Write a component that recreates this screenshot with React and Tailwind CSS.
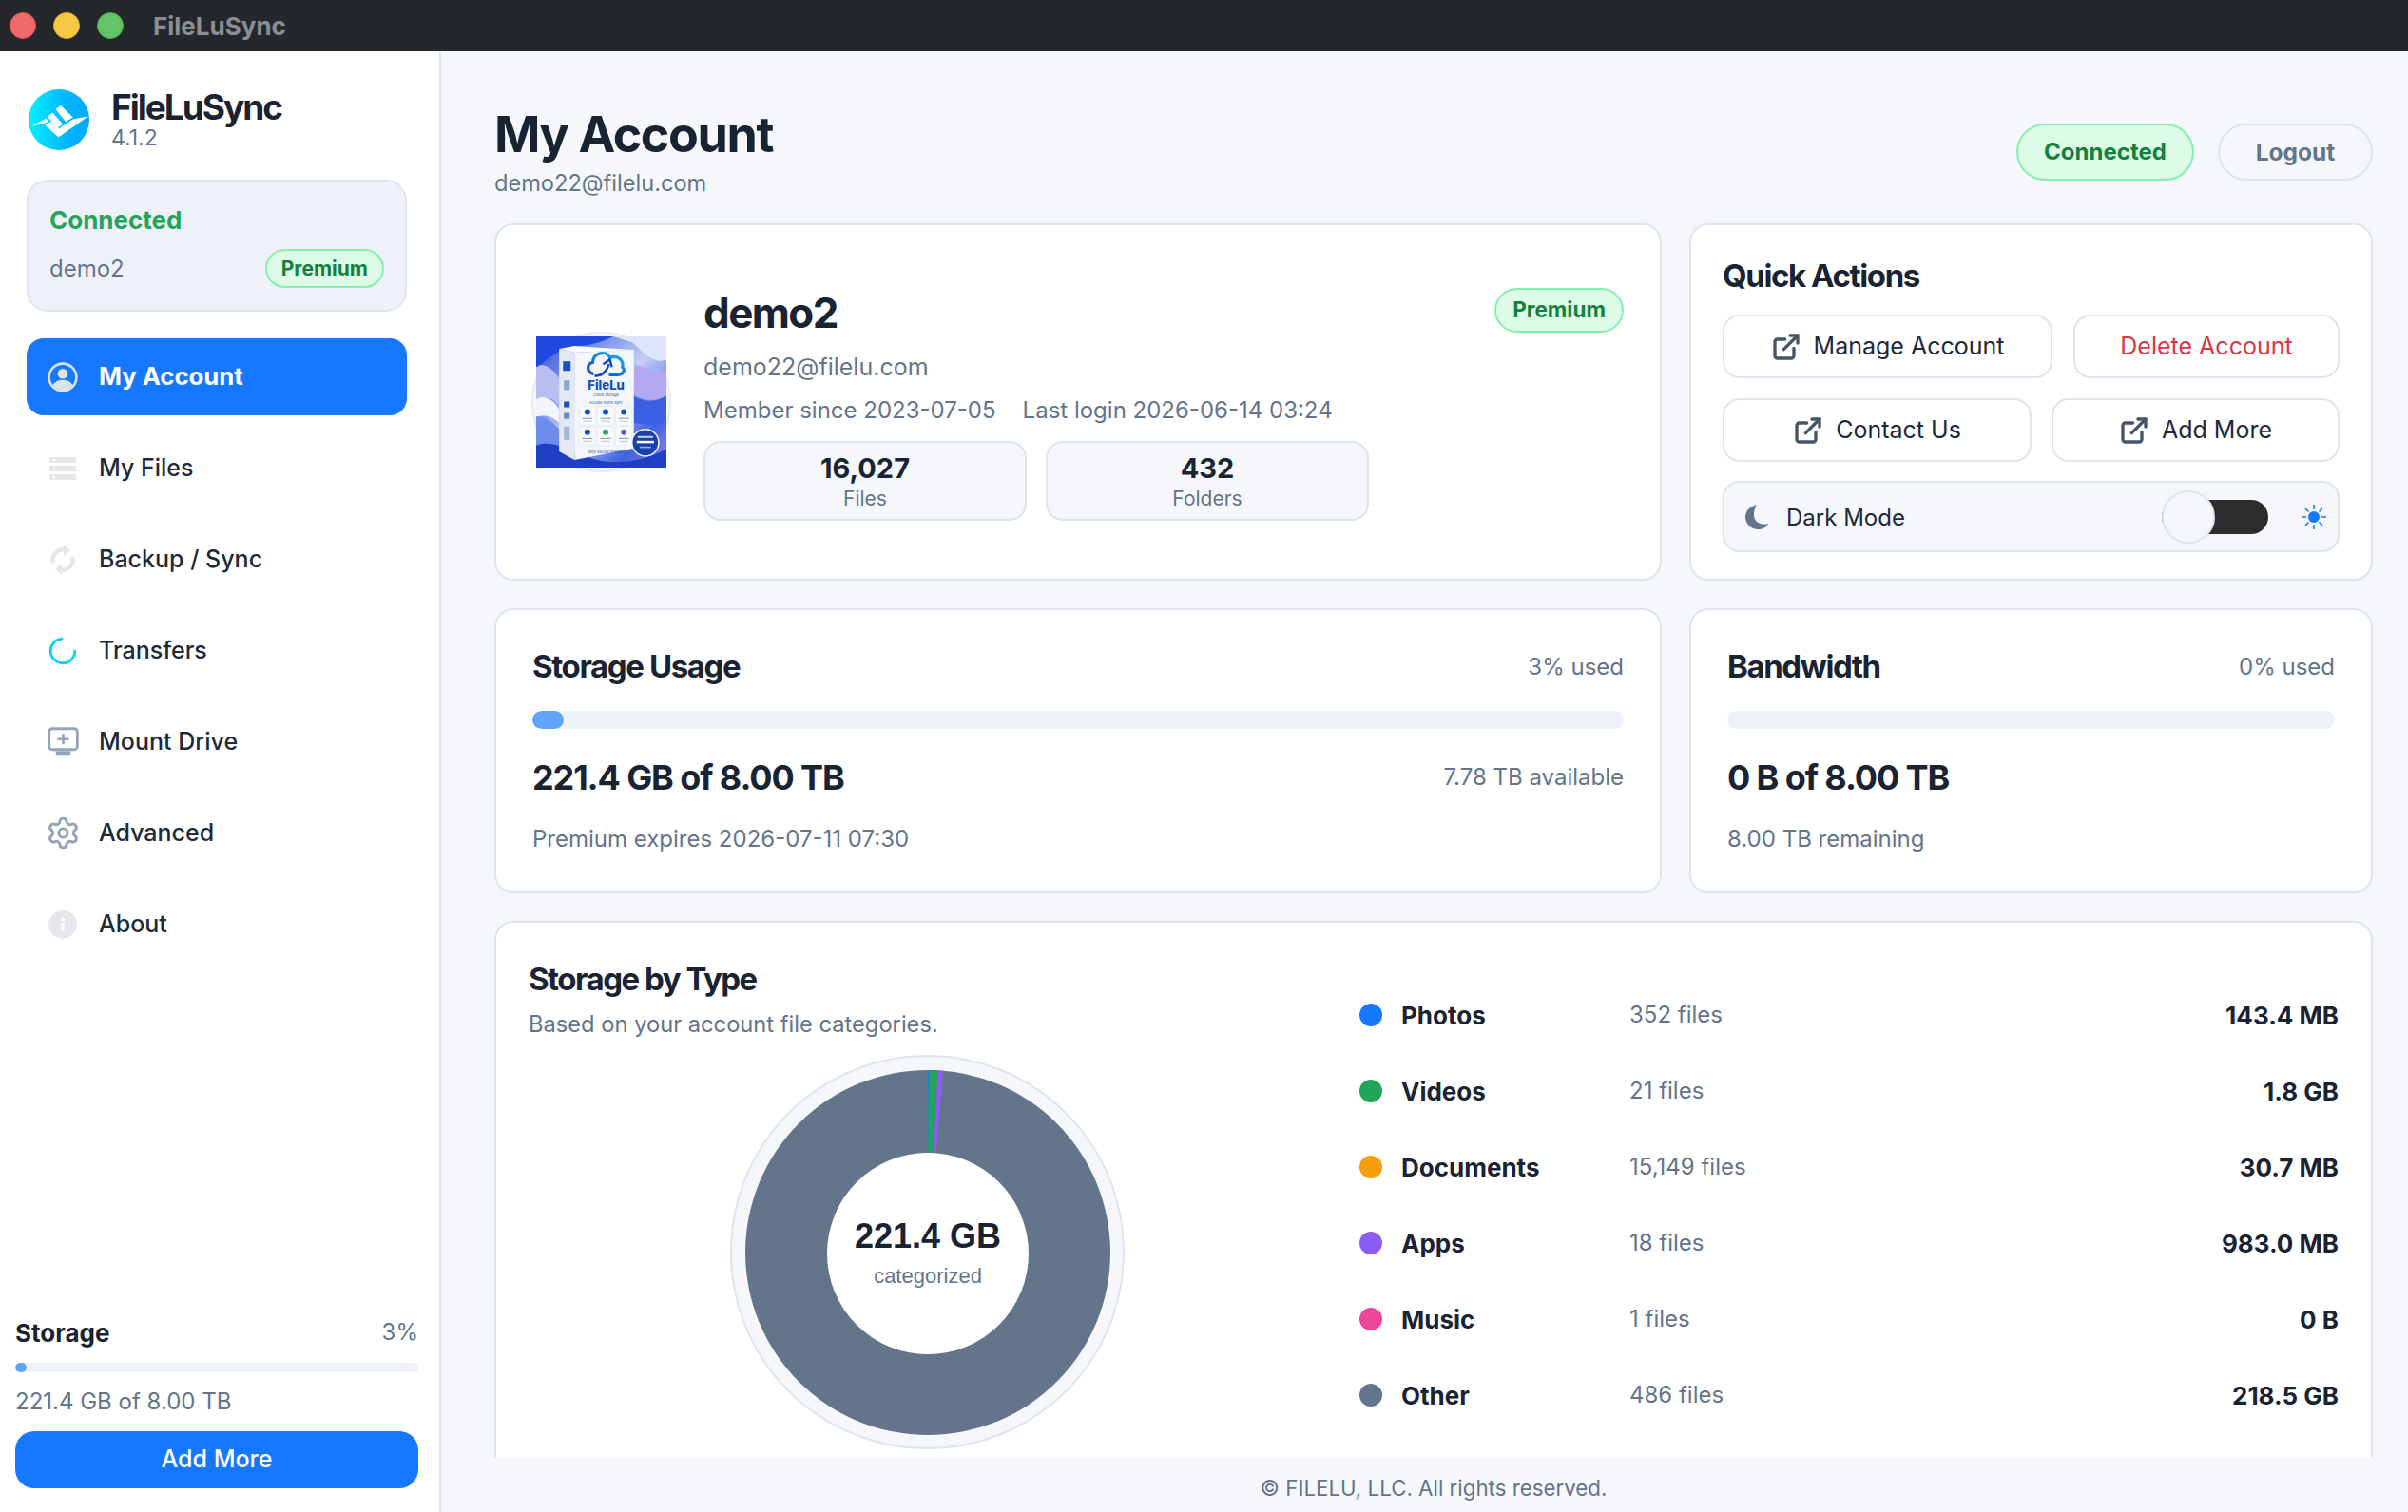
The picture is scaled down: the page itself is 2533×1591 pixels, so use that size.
import { ExternalLink, Settings } from 'lucide-react';

const font = { fontFamily: 'Inter, "Noto Sans", sans-serif' };

const AccountIcon = () => (
  <svg viewBox="0 0 30 30" className="w-[32px] h-[32px]">
    <circle cx="15" cy="15" r="13.5" fill="none" stroke="#dbe2ea" strokeWidth="2.4" />
    <circle cx="15" cy="11.5" r="5" fill="#dbe2ea" />
    <path d="M5 23c2-4 6-5.500 10-5.500s8 1.500 10 5.500c-2.500 3-6 4.500-10 4.500s-7.500-1.500-10-4.500z" fill="#dbe2ea" />
  </svg>
);

const FilesIcon = () => (
  <svg viewBox="0 0 28 24" className="w-[28px] h-[24px]">
    <rect x="0" y="0" width="28" height="6" fill="#e5e7eb" />
    <rect x="0" y="9" width="28" height="6" fill="#e5e7eb" />
    <rect x="0" y="18" width="28" height="6" fill="#e5e7eb" />
    <circle cx="5" cy="3" r="1.300" fill="#fff" />
    <circle cx="5" cy="12" r="1.300" fill="#fff" />
    <circle cx="5" cy="21" r="1.300" fill="#fff" />
  </svg>
);

const SyncIcon = () => (
  <svg viewBox="0 0 28 32" className="w-[28px] h-[32px]" fill="none">
    <path d="M4 19a10.500 10.500 0 0 1 13-13.200" stroke="#e5e7eb" strokeWidth="4.500" />
    <path d="M24 13a10.500 10.500 0 0 1-13 13.200" stroke="#e5e7eb" strokeWidth="4.500" />
    <path d="M15 0l7 6.500-7 5.500z" fill="#e5e7eb" />
    <path d="M13 32l-7-6.500 7-5.500z" fill="#e5e7eb" />
  </svg>
);

const SpinnerIcon = () => (
  <svg viewBox="0 0 30 30" className="w-[30px] h-[30px]" fill="none">
    <path d="M14 2.200A12.800 12.800 0 1 0 27.800 15" stroke="#0fd0fb" strokeWidth="2.800" strokeLinecap="round" />
  </svg>
);

const MountIcon = () => (
  <svg viewBox="0 0 30 28" className="w-[33px] h-[31px]" fill="none">
    <rect x="1.500" y="1.500" width="27" height="20" rx="3" stroke="#94a3b8" strokeWidth="2.600" />
    <path d="M15 6.500v10M9.500 11.500h11" stroke="#94a3b8" strokeWidth="2.400" />
    <rect x="8" y="23" width="14" height="3.500" fill="#94a3b8" />
  </svg>
);

const InfoIcon = () => (
  <svg viewBox="0 0 30 30" className="w-[30px] h-[30px]">
    <circle cx="15" cy="15" r="15" fill="#e5e7eb" />
    <circle cx="15" cy="9.500" r="2" fill="#fff" />
    <rect x="13.500" y="13" width="3" height="9" fill="#fff" />
  </svg>
);

const Logo = () => (
  <svg viewBox="15 15 185 185" className="w-[64px] h-[64px] shrink-0">
    <defs>
      <linearGradient id="logoGrad" x1="0" y1="0.5" x2="1" y2="0.5">
        <stop offset="0" stopColor="#04f0ff" />
        <stop offset="0.6" stopColor="#00b7ff" />
        <stop offset="1" stopColor="#00a8ff" />
      </linearGradient>
    </defs>
    <circle cx="107.500" cy="107.500" r="92.500" fill="url(#logoGrad)" />
    <path d="M24 127L68 104L78 113L60 120Z" fill="#fff" />
    <path d="M72 98L88 86L120 122L103 132Z" fill="#fff" />
    <path d="M97 75L113 64L150 100L128 114Z" fill="#fff" />
    <path d="M66 124L84 113L108 134L150 106L197 97L106 161Z" fill="#fff" />
  </svg>
);

const BoxArt = () => (
  <svg viewBox="0 0 136 137" className="relative w-[137px] h-[138px]">
    <defs>
      <linearGradient id="artBg" x1="0" y1="0" x2="1" y2="1">
        <stop offset="0" stopColor="#2348dc" />
        <stop offset="0.5" stopColor="#c4cef6" />
        <stop offset="0.8" stopColor="#3f63e0" />
        <stop offset="1" stopColor="#a884ec" />
      </linearGradient>
      <linearGradient id="artCloud" x1="0" y1="1" x2="1" y2="0">
        <stop offset="0" stopColor="#0c46c4" />
        <stop offset="1" stopColor="#21b0ee" />
      </linearGradient>
    </defs>
    <rect width="136" height="137" fill="url(#artBg)" />
    <path d="M0 0H80C60 12 36 8 20 18 10 24 6 30 0 32Z" fill="#2149df" />
    <path d="M0 32C8 26 18 34 24 44V72C16 62 8 64 0 66Z" fill="#b9bff0" />
    <path d="M0 66C8 60 18 66 24 76V90C14 82 8 82 0 84Z" fill="#f3f4fc" />
    <path d="M0 84C10 82 20 92 28 102V137H0Z" fill="#6d8cec" />
    <path d="M0 114C20 106 40 124 68 130 92 134 116 128 136 118V137H0Z" fill="#1f3fc4" />
    <path d="M80 0H136V24C122 30 112 16 100 6Z" fill="#dfe5fa" />
    <path d="M102 30C114 30 124 40 136 34V62C126 68 112 68 102 60Z" fill="#b2a8f0" />
    <path d="M102 62C116 70 126 68 136 62V88C124 94 112 92 102 90Z" fill="#3a5fe2" />
    <path d="M24 13L40 10 102 14 40 17Z" fill="#f8f9fc" />
    <path d="M24 13L40 17V129L24 120Z" fill="#e3e8f3" />
    <path d="M40 17L102 14V117L40 129Z" fill="#f4f6fb" />
    <path d="M60 39c-7-1-8-10-1-12 0-10 14-13 18-5 8-3 15 3 13 10 4 4 0 8-5 8H76" fill="none" stroke="url(#artCloud)" strokeWidth="3.200" />
    <path d="M61 41c7 1 12-3 15-12M70 29l7-5 2 8" fill="none" stroke="#0c46c4" strokeWidth="2.400" />
    <text x="73" y="56" textAnchor="middle" fontSize="13" fontWeight="800" fill="#1550b4" fontFamily="Inter">FileLu</text>
    <text x="73" y="63" textAnchor="middle" fontSize="4" fill="#475569" fontFamily="Inter">Cloud Storage</text>
    <text x="73" y="70" textAnchor="middle" fontSize="3.800" fontStyle="italic" fill="#1550b4" fontFamily="Inter">Access Share Sync</text>
    {[[45, 73], [64, 73], [83, 73], [45, 94], [64, 94], [83, 94]].map(([x, y], i) => (
      <g key={i}>
        <rect x={x} y={y} width="17" height="20" rx="1.500" fill="#f8fafd" stroke="#dfe4ef" strokeWidth="0.600" />
        <circle cx={x + 8.500} cy={y + 6} r="3" fill={i === 4 ? '#30a860' : i === 5 ? '#6a5acd' : '#1550c8'} />
        <rect x={x + 3} y={y + 12} width="11" height="1.200" fill="#94a3b8" />
        <rect x={x + 4} y={y + 15} width="9" height="1" fill="#b6c0d0" />
      </g>
    ))}
    <rect x="28" y="26" width="8" height="10" fill="#1d4fc4" />
    <rect x="29" y="46" width="6" height="10" fill="#8ea3d4" />
    <rect x="29" y="68" width="6" height="6" fill="#1d4fc4" />
    <rect x="29" y="80" width="6" height="6" fill="#6d86c8" />
    <rect x="29" y="94" width="6" height="14" fill="#a8b6d6" />
    <text x="72" y="122" textAnchor="middle" fontSize="3.800" fontStyle="italic" fill="#1550b4" fontFamily="Inter">Safe Secure Private</text>
    <circle cx="114" cy="111" r="14" fill="#1a3fae" stroke="#f0f4fc" strokeWidth="1.500" />
    <rect x="106" y="104" width="16" height="2" fill="#c9d6f4" />
    <rect x="105" y="109" width="18" height="2.500" fill="#fff" />
    <rect x="108" y="115" width="12" height="1.500" fill="#9db3e6" />
  </svg>
);

const Donut = () => {
  const cx = 192;
  const cy = 192;
  const r = 192;
  const hole = 106;
  const point = (deg, rad) => {
    const a = ((deg - 90) * Math.PI) / 180;
    return `${cx + rad * Math.cos(a)} ${cy + rad * Math.sin(a)}`;
  };
  const slice = (from, to) =>
    `M${point(from, hole)}L${point(from, r)}A${r} ${r} 0 ${to - from > 180 ? 1 : 0} 1 ${point(to, r)}L${point(to, hole)}A${hole} ${hole} 0 ${to - from > 180 ? 1 : 0} 0 ${point(from, hole)}Z`;
  return (
    <svg viewBox="0 0 384 384" className="w-[384px] h-[384px]">
      <circle cx={cx} cy={cy} r={r} fill="#64748b" />
      <path d={slice(0, 0.25)} fill="#1677ff" />
      <path d={slice(0.25, 3.2)} fill="#22a55b" />
      <path d={slice(3.2, 4.8)} fill="#8b5cf6" />
    </svg>
  );
};

const navItems = [
  { label: 'My Account', icon: <AccountIcon />, active: true },
  { label: 'My Files', icon: <FilesIcon /> },
  { label: 'Backup / Sync', icon: <SyncIcon /> },
  { label: 'Transfers', icon: <SpinnerIcon /> },
  { label: 'Mount Drive', icon: <MountIcon /> },
  { label: 'Advanced', icon: <Settings size={37} color="#94a3b8" strokeWidth={1.9} /> },
  { label: 'About', icon: <InfoIcon /> },
];

const categories = [
  { name: 'Photos', files: '352 files', size: '143.4 MB', dot: 'bg-[#1677ff]' },
  { name: 'Videos', files: '21 files', size: '1.8 GB', dot: 'bg-[#22a55b]' },
  { name: 'Documents', files: '15,149 files', size: '30.7 MB', dot: 'bg-[#f59e0b]' },
  { name: 'Apps', files: '18 files', size: '983.0 MB', dot: 'bg-[#8b5cf6]' },
  { name: 'Music', files: '1 files', size: '0 B', dot: 'bg-[#ec4899]' },
  { name: 'Other', files: '486 files', size: '218.5 GB', dot: 'bg-[#64748b]' },
];

const Sidebar = () => (
  <aside className="w-[464px] shrink-0 bg-white border-r-2 border-[#dfe5ef] flex flex-col">
    <div className="flex items-center gap-[23px] pl-[30px] pt-[40px]">
      <Logo />
      <div className="flex flex-col">
        <span className="text-[37px] leading-[38px] font-bold tracking-[-2px] text-[#1a2332]">FileLuSync</span>
        <span className="text-[23px] leading-[26px] text-[#64748b]">4.1.2</span>
      </div>
    </div>

    <div className="ml-[28px] mr-[34px] mt-[31px] h-[139px] rounded-[22px] border-2 border-[#dfe5ef] bg-[#eef1f7] px-[22px] pt-[21px]">
      <div className="text-[26px] leading-[40px] font-bold text-[#22a55b]">Connected</div>
      <div className="flex items-center justify-between mt-[10px]">
        <span className="text-[24px] leading-[40px] text-[#64748b]">demo2</span>
        <span className="h-[41px] px-[15px] flex items-center rounded-full border-2 border-[#86efac] bg-[#dcfce7] text-[21px] font-bold text-[#15803d]">Premium</span>
      </div>
    </div>

    <nav className="ml-[28px] mr-[34px] mt-[28px] flex flex-col gap-[15px]">
      {navItems.map((item) => (
        <div
          key={item.label}
          className={`h-[81px] rounded-[18px] flex items-center ${
            item.active ? 'bg-[#1677ff] text-white font-bold text-[25.7px]' : 'text-[#1e293b] font-medium text-[25px]'
          }`}
        >
          <span className="w-[76px] flex justify-center">{item.icon}</span>
          <span>{item.label}</span>
        </div>
      ))}
    </nav>

    <div className="mt-auto pl-[16px] pr-[22px] pb-[25px]">
      <div className="flex items-center justify-between h-[40px]">
        <span className="text-[26px] font-bold text-[#1a2332]">Storage</span>
        <span className="text-[24px] text-[#64748b]">3%</span>
      </div>
      <div className="mt-[12px] h-[10px] rounded-full bg-[#eef1f7] overflow-hidden">
        <div className="h-full w-[12px] rounded-full bg-[#60a5fa]" />
      </div>
      <div className="mt-[14px] text-[24px] leading-[34px] text-[#64748b]">221.4 GB of 8.00 TB</div>
      <button className="mt-[14px] w-full h-[60px] rounded-[20px] bg-[#1677ff] text-white text-[25px] font-medium">Add More</button>
    </div>
  </aside>
);

const ActionButton = ({ children, className, icon = true, tone = 'text-[#1e293b]' }) => (
  <button className={`h-[67px] rounded-[18px] border-2 border-[#dfe5ef] bg-white flex items-center justify-center gap-[13px] text-[25px] ${tone} ${className}`}>
    {icon && <ExternalLink size={32} color="#475569" strokeWidth={2.5} />}
    {children}
  </button>
);

const Card = ({ children, className }) => (
  <section className={`rounded-[20px] border-2 border-[#dfe5ef] bg-white ${className}`}>{children}</section>
);

const AccountCard = () => (
  <Card className="w-[1228px] h-[376px] flex items-center pl-[42px] pr-[38px]">
    <div className="relative w-[137px] h-[138px] shrink-0 flex items-center justify-center">
      <div className="absolute -inset-x-[5px] -inset-y-[5px] rounded-full bg-[#f5f7fb] border-2 border-[#e6ebf3]" />
      <BoxArt />
    </div>
    <div className="ml-[39px] flex-1 pt-[4px]">
      <div className="flex items-start justify-between">
        <h2 className="text-[44px] leading-[52px] font-bold tracking-[-1.6px] text-[#1a2332]">demo2</h2>
        <span className="h-[47px] px-[17px] flex items-center rounded-full border-2 border-[#86efac] bg-[#dcfce7] text-[22.5px] font-bold text-[#15803d]">Premium</span>
      </div>
      <div className="mt-[14px] text-[25px] leading-[34px] text-[#64748b]">demo22@filelu.com</div>
      <div className="mt-[12px] flex gap-[28px] text-[24px] leading-[34px] text-[#64748b]">
        <span>Member since 2023-07-05</span>
        <span>Last login 2026-06-14 03:24</span>
      </div>
      <div className="mt-[15px] flex gap-[20px]">
        {[['16,027', 'Files'], ['432', 'Folders']].map(([value, label]) => (
          <div key={label} className="w-[340px] h-[84px] rounded-[18px] border-2 border-[#dfe5ef] bg-[#f5f7fb] flex flex-col items-center justify-center">
            <span className="text-[29px] leading-[38px] font-bold text-[#1a2332]">{value}</span>
            <span className="text-[21px] leading-[26px] text-[#64748b]">{label}</span>
          </div>
        ))}
      </div>
    </div>
  </Card>
);

const QuickActions = () => (
  <Card className="flex-1 h-[376px] px-[33px] pt-[31px]">
    <h3 className="text-[33px] leading-[44px] font-bold tracking-[-1.4px] text-[#1a2332]">Quick Actions</h3>
    <div className="mt-[19px] flex gap-[22px]">
      <ActionButton className="w-[347px]">Manage Account</ActionButton>
      <ActionButton className="flex-1" icon={false} tone="text-[#dc3545]">Delete Account</ActionButton>
    </div>
    <div className="mt-[21px] flex gap-[21px]">
      <ActionButton className="w-[325px]">Contact Us</ActionButton>
      <ActionButton className="flex-1">Add More</ActionButton>
    </div>
    <div className="mt-[20px] h-[75px] rounded-[18px] border-2 border-[#dfe5ef] bg-[#f5f7fb] flex items-center pl-[22px] pr-[12px]">
      <svg viewBox="0 0 24 26" className="w-[24px] h-[26px]">
        <path d="M12 0C4 2 0 7 0 13c0 7 6 13 13 13 5 0 9-2 11-6-7 2-14-1-15-8-.5-4 1-9 3-12z" fill="#64748b" />
      </svg>
      <span className="ml-[19px] pt-[3px] text-[24px] text-[#1e293b]">Dark Mode</span>
      <div className="relative ml-auto w-[112px] h-[36px] rounded-full bg-[#2c2c2c]">
        <div className="absolute left-[0px] -top-[10px] w-[56px] h-[56px] rounded-full border-2 border-[#dfe5ef] bg-[#f5f7fb]" />
      </div>
      <svg viewBox="0 0 26 26" className="ml-[35px] w-[26px] h-[26px]" stroke="#1677ff" strokeWidth="1.600">
        <circle cx="13" cy="13" r="6" fill="#1677ff" stroke="none" />
        <path d="M13 0v5M13 21v5M0 13h5M21 13h5M4 4l3.500 3.500M18.500 18.500L22 22M22 4l-3.500 3.500M7.500 18.500L4 22" />
      </svg>
    </div>
  </Card>
);

const UsageCard = ({ className, title, used, fill, amount, side, note }) => (
  <Card className={`h-[300px] ${className}`}>
    <div className="flex items-center justify-between h-[52px] mt-[34px]">
      <h3 className="text-[33px] font-bold tracking-[-1.4px] text-[#1a2332]">{title}</h3>
      <span className="text-[24px] text-[#64748b]">{used}</span>
    </div>
    <div className="mt-[20px] h-[19px] rounded-full bg-[#eef1f7] overflow-hidden">
      {fill && <div className="h-full w-[33px] rounded-full bg-[#60a5fa]" />}
    </div>
    <div className="mt-[27px] flex items-center justify-between h-[48px]">
      <span className="text-[36px] font-bold tracking-[-1.1px] text-[#1a2332]">{amount}</span>
      {side && <span className="text-[24px] text-[#64748b]">{side}</span>}
    </div>
    <div className="mt-[23px] text-[24px] leading-[36px] text-[#64748b]">{note}</div>
  </Card>
);

const StorageByType = () => (
  <Card className="flex-1 min-h-[700px] pl-[34px] pr-[34px] flex">
    <div className="w-[874px] shrink-0 relative">
      <h3 className="mt-[37px] text-[33px] leading-[44px] font-bold tracking-[-1.5px] text-[#1a2332]">Storage by Type</h3>
      <p className="mt-[9px] text-[23.7px] leading-[34px] text-[#64748b]">Based on your account file categories.</p>
      <div className="ml-[212px] mt-[15px] w-[415px] h-[415px] rounded-full border-2 border-[#dfe5ef] bg-[#f5f7fb] flex items-center justify-center relative">
        <Donut />
        <div className="absolute top-[101px] left-[100px] w-[212px] h-[212px] rounded-full bg-white flex flex-col items-center" style={{ fontFamily: '"Liberation Sans", Arial, sans-serif' }}>
          <span className="mt-[66px] text-[36px] leading-[44px] font-bold text-[#1a2332]">221.4 GB</span>
          <span className="mt-[5px] text-[22px] leading-[30px] text-[#64748b]">categorized</span>
        </div>
      </div>
    </div>
    <div className="flex-1 pt-[57px]">
      {categories.map((cat) => (
        <div key={cat.name} className="h-[80px] flex items-center">
          <span className={`w-[24px] h-[24px] rounded-full ${cat.dot}`} />
          <span className="ml-[20px] w-[240px] text-[26px] font-bold text-[#1a2332]">{cat.name}</span>
          <span className="text-[24px] text-[#64748b]">{cat.files}</span>
          <span className="ml-auto text-[26px] font-bold text-[#1a2332]">{cat.size}</span>
        </div>
      ))}
    </div>
  </Card>
);

export default function App() {
  return (
    <div className="h-screen flex flex-col overflow-hidden bg-[#f5f7fb]" style={font}>
      <header className="h-[54px] shrink-0 bg-[#25282b] flex items-center pl-[10px]">
        <span className="w-[28px] h-[28px] rounded-full bg-[#ee6a6a] border border-[#d9534f]" />
        <span className="ml-[18px] w-[28px] h-[28px] rounded-full bg-[#f5c842] border border-[#e0ae2c]" />
        <span className="ml-[18px] w-[28px] h-[28px] rounded-full bg-[#62c466] border border-[#4caf50]" />
        <span className="ml-[31px] text-[26px] font-bold text-[#8a8f96]">FileLuSync</span>
      </header>

      <div className="flex flex-1 min-h-0">
        <Sidebar />

        <main className="flex-1 min-w-0 flex flex-col pl-[56px] pr-[37px]">
          <div className="flex-1 min-h-0 overflow-hidden pt-[58px]">
            <div className="flex items-start justify-between h-[123px]">
              <div>
                <h1 className="text-[52px] leading-[60px] font-bold tracking-[-1.4px] text-[#1a2332]">My Account</h1>
                <p className="mt-[5px] text-[23.6px] leading-[32px] text-[#64748b]">demo22@filelu.com</p>
              </div>
              <div className="flex gap-[25px] mt-[18px]">
                <span className="h-[60px] w-[187px] rounded-full border-2 border-[#86efac] bg-[#dcfce7] flex items-center justify-center text-[24px] font-bold text-[#15803d]">Connected</span>
                <span className="h-[60px] w-[163px] rounded-full border-2 border-[#dfe5ef] bg-[#f5f7fb] flex items-center justify-center text-[24.5px] font-bold text-[#64748b]">Logout</span>
              </div>
            </div>

            <div className="flex gap-[29px]">
              <AccountCard />
              <QuickActions />
            </div>

            <div className="flex gap-[29px] mt-[29px]">
              <UsageCard
                className="w-[1228px] px-[38px]"
                title="Storage Usage"
                used="3% used"
                fill
                amount="221.4 GB of 8.00 TB"
                side="7.78 TB available"
                note="Premium expires 2026-07-11 07:30"
              />
              <UsageCard
                className="flex-1 px-[38px]"
                title="Bandwidth"
                used="0% used"
                amount="0 B of 8.00 TB"
                note="8.00 TB remaining"
              />
            </div>

            <div className="flex mt-[29px]">
              <StorageByType />
            </div>
          </div>
          <footer className="h-[57px] shrink-0 pt-[7px] flex items-center justify-center text-[22.3px] text-[#64748b]">© FILELU, LLC. All rights reserved.</footer>
        </main>
      </div>
    </div>
  );
}
